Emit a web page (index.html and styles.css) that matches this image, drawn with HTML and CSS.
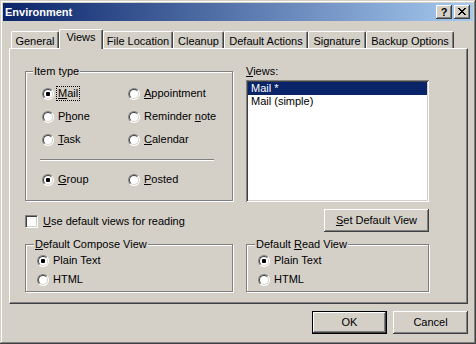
FILE: index.html
```html
<!DOCTYPE html>
<html lang="en">
<head>
  <meta charset="UTF-8" />
  <title>Environment</title>
  <link rel="stylesheet" href="styles.css">
</head>
<body>
  <div class="window">
    <div class="titlebar">
      <span class="title">Environment</span>
      <div class="caption-buttons">
        <span class="cap-btn help">?</span>
        <span class="cap-btn close">
          <svg width="8" height="7" viewBox="0 0 8 7" shape-rendering="crispEdges">
            <path d="M0 0h2v1h-2z M6 0h2v1h-2z M1 1h2v1h-2z M5 1h2v1h-2z M2 2h4v1h-4z M3 3h2v1h-2z M2 4h4v1h-4z M1 5h2v1h-2z M5 5h2v1h-2z M0 6h2v1h-2z M6 6h2v1h-2z" fill="#000"/>
          </svg>
        </span>
      </div>
    </div>

    <div class="tabs">
      <div class="tab w-general">General</div>
      <div class="tab active w-views">Views</div>
      <div class="tab w-file">File Location</div>
      <div class="tab w-cleanup">Cleanup</div>
      <div class="tab w-actions">Default Actions</div>
      <div class="tab w-signature">Signature</div>
      <div class="tab w-backup">Backup Options</div>
    </div>

    <div class="panel">
      <div class="panel-grid">
        <div class="group item-type">
          <div class="legend">Item type</div>
          <div class="radio-grid">
            <div class="radio-item"><span class="radio checked"></span><span class="lbl focus"><u>M</u>ail</span></div>
            <div class="radio-item"><span class="radio"></span><span class="lbl"><u>A</u>ppointment</span></div>
            <div class="radio-item"><span class="radio"></span><span class="lbl">P<u>h</u>one</span></div>
            <div class="radio-item"><span class="radio"></span><span class="lbl">Reminder <u>n</u>ote</span></div>
            <div class="radio-item"><span class="radio"></span><span class="lbl"><u>T</u>ask</span></div>
            <div class="radio-item"><span class="radio"></span><span class="lbl"><u>C</u>alendar</span></div>
          </div>
          <div class="sep"></div>
          <div class="radio-grid single">
            <div class="radio-item"><span class="radio checked"></span><span class="lbl"><u>G</u>roup</span></div>
            <div class="radio-item"><span class="radio"></span><span class="lbl"><u>P</u>osted</span></div>
          </div>
        </div>

        <div class="views">
          <div class="views-label"><u>V</u>iews:</div>
          <div class="listbox">
            <div class="list-row selected">Mail *</div>
            <div class="list-row">Mail (simple)</div>
          </div>
        </div>

        <div class="check-item">
          <span class="checkbox"></span><span class="lbl"><u>U</u>se default views for reading</span>
        </div>
        <div class="btn set-default"><span><u>S</u>et Default View</span></div>

        <div class="group small">
          <div class="legend"><u>D</u>efault Compose View</div>
          <div class="radio-item row"><span class="radio checked"></span><span class="lbl">Plain Text</span></div>
          <div class="radio-item row"><span class="radio"></span><span class="lbl">HTML</span></div>
        </div>

        <div class="group small">
          <div class="legend">Default <u>R</u>ead View</div>
          <div class="radio-item row"><span class="radio checked"></span><span class="lbl">Plain Text</span></div>
          <div class="radio-item row"><span class="radio"></span><span class="lbl">HTML</span></div>
        </div>
      </div>
    </div>

    <div class="footer">
      <div class="btn default">OK</div>
      <div class="btn">Cancel</div>
    </div>
  </div>
</body>
</html>
```

FILE: styles.css
```css
body {
  margin: 0;
  background: #d4d0c8;
  font-family: "Liberation Sans", Arial, sans-serif;
  font-size: 11px;
  color: #000;
}
.window {
  width: 476px;
  height: 344px;
  box-sizing: border-box;
  padding: 3px;
  background: #d4d0c8;
  box-shadow: inset -1px -1px #404040, inset 1px 1px #d4d0c8,
              inset -2px -2px #808080, inset 2px 2px #fff;
}
.titlebar {
  height: 18px;
  display: flex;
  align-items: center;
  justify-content: space-between;
  padding: 0 3px 0 2px;
  background: linear-gradient(to right, #0a246a, #a6caf0);
}
.title {
  color: #fff;
  font-weight: bold;
  font-size: 11px;
  line-height: 18px;
}
.caption-buttons { display: flex; gap: 2px; }
.cap-btn {
  width: 16px;
  height: 14px;
  box-sizing: border-box;
  display: flex;
  align-items: center;
  justify-content: center;
  background: #d4d0c8;
  box-shadow: inset -1px -1px #404040, inset 1px 1px #fff, inset -2px -2px #808080;
  font-weight: bold;
  font-size: 11px;
  line-height: 12px;
}
.cap-btn svg { display: block; margin-top: -1px; }

/* tabs */
.tabs {
  display: flex;
  align-items: flex-end;
  height: 19px;
  margin: 8px 0 0 6px;
  padding-left: 2px;
}
.tab {
  height: 17px;
  box-sizing: border-box;
  padding-top: 3px;
  text-align: center;
  line-height: 13px;
  white-space: nowrap;
  border-top: 1px solid #fff;
  border-left: 1px solid #fff;
  border-right: 1px solid #404040;
  border-radius: 2px 2px 0 0;
  box-shadow: inset -1px 0 #808080;
}
.tab.active {
  height: 20px;
  padding-top: 1px;
  margin-bottom: -1px;
  position: relative;
  z-index: 1;
  background: #d4d0c8;
}
.w-general { width: 48px; }
.w-views { width: 44px; }
.w-file { width: 70px; }
.w-cleanup { width: 51px; }
.w-actions { width: 84px; }
.w-signature { width: 58px; }
.w-backup { width: 88px; }

.panel {
  width: 459px;
  height: 256px;
  margin-left: 6px;
  box-sizing: border-box;
  padding: 16px 0 0 15px;
  border: 1px solid;
  border-color: #fff #404040 #404040 #fff;
  box-shadow: inset -1px -1px #808080;
}
.panel-grid {
  display: grid;
  grid-template-columns: 208px 183px;
  column-gap: 13px;
}

/* group boxes */
.group {
  border: 1px solid #808080;
  box-shadow: 1px 1px 0 #fff, inset 1px 1px 0 #fff;
}
.legend {
  display: table;
  margin: -7px 0 0 7px;
  padding: 0 1px;
  background: #d4d0c8;
  line-height: 13px;
}
.item-type {
  margin-top: 6px;
  padding-bottom: 9px;
  height: 130px;
  box-sizing: border-box;
}
.radio-grid {
  display: grid;
  grid-template-columns: 86px auto;
  grid-auto-rows: 23px;
  margin-top: 4px;
  padding-left: 16px;
}
.radio-grid.single { margin-top: 7px; }
.radio-item {
  display: flex;
  align-items: center;
  gap: 2px;
}
.sep {
  margin: 8px 0 0 14px;
  width: 174px;
  border-top: 1px solid #808080;
  border-bottom: 1px solid #fff;
}
.lbl {
  border: 1px solid transparent;
  padding: 0 1px;
  line-height: 13px;
  white-space: nowrap;
}
.lbl.focus { border: 1px dotted #000; }
u { text-underline-offset: 1px; }

.radio {
  position: relative;
  flex: none;
  width: 12px;
  height: 12px;
  box-sizing: border-box;
  border-radius: 50%;
  border: 1px solid;
  border-color: #808080 #fff #fff #808080;
  background: #fff;
}
.radio::before {
  content: "";
  position: absolute;
  inset: 0;
  border-radius: 50%;
  border: 1px solid;
  border-color: #404040 #d4d0c8 #d4d0c8 #404040;
}
.radio.checked::after {
  content: "";
  position: absolute;
  left: 3px;
  top: 3px;
  width: 4px;
  height: 4px;
  border-radius: 1px;
  background: #000;
}

/* views list */
.views-label { line-height: 13px; }
.listbox {
  margin-top: 2px;
  height: 122px;
  box-sizing: border-box;
  padding: 2px;
  background: #fff;
  box-shadow: inset 1px 1px #808080, inset -1px -1px #fff,
              inset 2px 2px #404040, inset -2px -2px #d4d0c8;
}
.list-row {
  line-height: 13px;
  padding-left: 3px;
}
.list-row.selected {
  background: #0a246a;
  color: #fff;
}

/* checkbox row */
.check-item {
  margin-top: 9px;
  display: flex;
  align-items: center;
  gap: 3px;
  align-self: center;
}
.checkbox {
  position: relative;
  flex: none;
  width: 13px;
  height: 13px;
  box-sizing: border-box;
  border: 1px solid;
  border-color: #808080 #fff #fff #808080;
  background: #fff;
  box-shadow: inset 1px 1px #404040, inset -1px -1px #d4d0c8;
}

/* buttons */
.btn {
  width: 75px;
  height: 23px;
  box-sizing: border-box;
  display: flex;
  align-items: center;
  justify-content: center;
  line-height: 13px;
  box-shadow: inset -1px -1px #404040, inset 1px 1px #fff, inset -2px -2px #808080;
}
.btn.default {
  border: 1px solid #000;
}
.set-default {
  width: 105px;
  margin-top: 7px;
  justify-self: end;
}
.group.small {
  margin-top: 12px;
  height: 48px;
  box-sizing: border-box;
  padding-left: 11px;
}
.group.small .legend { margin-left: -3px; }
.radio-item.row { height: 19px; }

.footer {
  display: flex;
  justify-content: flex-end;
  gap: 6px;
  width: 459px;
  margin: 7px 0 0 6px;
}
```
